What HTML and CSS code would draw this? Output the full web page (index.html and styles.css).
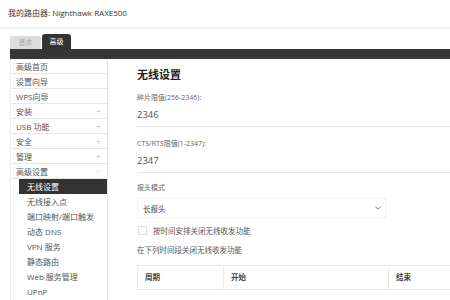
FILE: index.html
```html
<!DOCTYPE html>
<html lang="zh">
<head>
<meta charset="utf-8">
<link rel="stylesheet" href="styles.css">
</head>
<body>
<header class="top">我的路由器: Nighthawk RAXE500</header>
<nav class="tabs">
  <span class="tab">基本</span>
  <span class="tab active">高级</span>
</nav>
<div class="bar"></div>
<div class="layout">
  <aside class="side">
    <div class="item">高级首页</div>
    <div class="item">设置向导</div>
    <div class="item">WPS向导</div>
    <div class="item">安装<span class="pm">+</span></div>
    <div class="item">USB 功能<span class="pm">+</span></div>
    <div class="item">安全<span class="pm">+</span></div>
    <div class="item">管理<span class="pm">+</span></div>
    <div class="item">高级设置<span class="pm">−</span></div>
    <div class="sub selected">无线设置</div>
    <div class="sub">无线接入点</div>
    <div class="sub">端口映射/端口触发</div>
    <div class="sub">动态 DNS</div>
    <div class="sub">VPN 服务</div>
    <div class="sub">静态路由</div>
    <div class="sub">Web 服务管理</div>
    <div class="sub">UPnP</div>
  </aside>
  <main class="main">
    <h1 class="title">无线设置</h1>
    <div class="field">
      <div class="label">碎片限值(256-2346):</div>
      <div class="value">2346</div>
    </div>
    <div class="field">
      <div class="label">CTS/RTS限值(1-2347):</div>
      <div class="value">2347</div>
    </div>
    <div class="label l3">报头模式</div>
    <div class="select">
      <span>长报头</span>
      <svg class="chev" width="8" height="6" viewBox="0 0 8 6"><path d="M1.5 1.8 L4 4.2 L6.5 1.8" fill="none" stroke="#777" stroke-width="1"/></svg>
    </div>
    <div class="check">
      <span class="box"></span>
      <span>按时间安排关闭无线收发功能</span>
    </div>
    <div class="note">在下列时间段关闭无线收发功能</div>
    <div class="table">
      <div class="cell c1">周期</div>
      <div class="cell c2">开始</div>
      <div class="cell c3">结束</div>
    </div>
  </main>
</div>
</body>
</html>
```

FILE: styles.css
```css
html, body {
  margin: 0;
  padding: 0;
  background: #fff;
  width: 450px;
  height: 300px;
  overflow: hidden;
  font-family: "Open Sans", "Noto Sans CJK SC", sans-serif;
  color: #555;
}
.top {
  height: 27px;
  line-height: 26px;
  padding-left: 8px;
  font-size: 8px;
  color: #333;
  border-bottom: 2px solid #f0f0f0;
}
.tabs {
  display: flex;
  align-items: flex-end;
  gap: 1px;
  padding-left: 10px;
  height: 20px;
}
.tab {
  width: 31px;
  height: 13px;
  line-height: 13px;
  text-align: center;
  font-size: 7px;
  background: #dcdcdc;
  color: #aaa;
  border-radius: 2px 2px 0 0;
}
.tab.active {
  width: 29px;
  height: 15px;
  line-height: 15px;
  background: #333;
  color: #fff;
  border-radius: 3px 3px 0 0;
}
.bar {
  margin-left: 10px;
  height: 10px;
  background: #363636;
}
.layout {
  display: flex;
  padding-left: 10px;
}
.side {
  width: 96px;
  flex: none;
  border-left: 1px solid #eee;
  border-right: 1px solid #e4e4e4;
  min-height: 241px;
}
.item {
  display: flex;
  justify-content: space-between;
  align-items: center;
  height: 14px;
  padding: 0 6px 0 5px;
  font-size: 8px;
  color: #555;
  border-bottom: 1px solid #e8e8e8;
}
.pm {
  color: #bbb;
  font-size: 9px;
  font-weight: 300;
}
.sub {
  height: 15px;
  line-height: 15px;
  margin-left: 8px;
  padding-left: 8px;
  font-size: 8px;
  color: #555;
}
.sub.selected {
  background: #333;
  color: #fff;
}
.main {
  flex: 1;
  padding: 9px 0 0 29px;
  display: flex;
  flex-direction: column;
}
.title {
  margin: 0;
  font-size: 11px;
  line-height: 14px;
  font-weight: bold;
  color: #222;
}
.field {
  margin-top: 11px;
  border-bottom: 1px solid #e6e6e6;
  padding-bottom: 5px;
}
.field + .field {
  margin-top: 12px;
}
.label {
  font-size: 7px;
  line-height: 10px;
  color: #666;
}
.value {
  margin-top: 6px;
  font-size: 9.5px;
  line-height: 12px;
  color: #555;
}
.l3 {
  margin-top: 10px;
}
.select {
  margin-top: 5px;
  width: 249px;
  height: 20px;
  box-sizing: border-box;
  border: 1px solid #f0f0f0;
  display: flex;
  align-items: center;
  justify-content: space-between;
  padding: 0 3px 0 5px;
  font-size: 7.5px;
  color: #444;
}
.chev {
  display: block;
}
.check {
  margin-top: 6px;
  height: 12px;
  display: flex;
  align-items: center;
  gap: 6px;
  padding-left: 1px;
  font-size: 7.5px;
  color: #555;
}
.box {
  width: 7px;
  height: 7px;
  border: 1px solid #ddd;
  border-radius: 1px;
}
.note {
  margin-top: 9px;
  font-size: 7.5px;
  line-height: 10px;
  color: #555;
}
.table {
  margin-top: 10px;
  display: flex;
  height: 23px;
  border: 1px solid #ebebeb;
  border-right: none;
  margin-right: -20px;
}
.cell {
  font-size: 7.5px;
  line-height: 23px;
  padding-left: 7px;
  color: #444;
  font-weight: 600;
}
.c1 { width: 78px; border-right: 1px solid #ebebeb; }
.c2 { width: 157px; border-right: 1px solid #ebebeb; }
.c3 { flex: 1; }
```
